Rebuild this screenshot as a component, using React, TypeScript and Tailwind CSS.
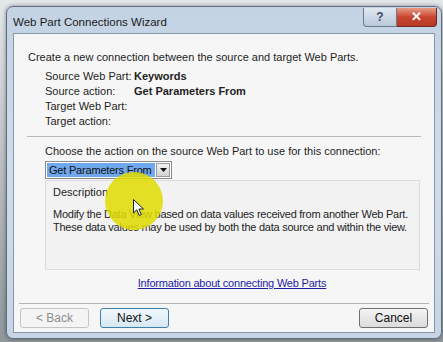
import React from 'react';

const font = { fontFamily: '"Liberation Sans", Arial, sans-serif' };

const InfoRow: React.FC<{ label: string; value?: string }> = ({ label, value }) => (
  <div className="flex h-[15px] items-center whitespace-nowrap">
    <span className="w-[89px]">{label}</span>
    {value && <span className="font-bold">{value}</span>}
  </div>
);

const Button: React.FC<{ label: string; disabled?: boolean; focused?: boolean }> = ({ label, disabled, focused }) => (
  <div
    className={`flex h-[20px] w-[69px] items-center justify-center rounded-[3px] border text-[12px] ${
      disabled
        ? 'border-[#c4c4c4] bg-[#f4f4f4] text-[#8d8d8d]'
        : focused
        ? 'border-[#3c7fb1] bg-gradient-to-b from-[#f2f8fc] to-[#d6e8f4] text-[#111]'
        : 'border-[#707070] bg-gradient-to-b from-[#f4f4f4] to-[#dcdcdc] text-[#111]'
    }`}
  >
    {label}
  </div>
);

export default function App() {
  return (
    <div className="relative h-[342px] w-[443px] overflow-hidden bg-gradient-to-b from-[#e4e7ea] to-[#8f969c] pt-[6px] pl-[6px] pr-[1px]" style={font}>
      {/* window frame */}
      <div className="h-[333px] rounded-[7px] border border-[#5f6d7c] bg-gradient-to-b from-[#c3d3e4] via-[#cfdceb] to-[#c6d5e5] px-[6px] shadow-[0_0_4px_rgba(0,0,0,0.4)]">
        {/* title bar */}
        <div className="flex h-[26px] items-start justify-between">
          <span className="pt-[7px] text-[11.5px] text-[#1b1b1b]">Web Part Connections Wizard</span>
          <div className="mr-[-2px] mt-[1px] flex">
            <div className="flex h-[19px] w-[34px] items-center justify-center rounded-bl-[4px] border border-t-0 border-[#6c7a8a] bg-gradient-to-b from-[#dfe8f2] to-[#b9c8d9] text-[12px] font-bold text-[#3b4b5e]">?</div>
            <div className="flex h-[19px] w-[40px] items-center justify-center rounded-br-[4px] border border-t-0 border-l-0 border-[#6a2a22] bg-gradient-to-b from-[#e59a86] via-[#c8452f] to-[#b73a24] text-[13px] font-bold text-white">✕</div>
          </div>
        </div>

        {/* client area */}
        <div className="h-[300px] whitespace-nowrap border border-[#8696a8] bg-[#f6f6f6] text-[11px] text-[#1e1e1e]">
          <div className="pl-[14px] pt-[16px] leading-[15px]">Create a new connection between the source and target Web Parts.</div>

          <div className="mt-[4px] pl-[31px]">
            <InfoRow label="Source Web Part:" value="Keywords" />
            <InfoRow label="Source action:" value="Get Parameters From" />
            <InfoRow label="Target Web Part:" />
            <InfoRow label="Target action:" />
          </div>

          <div className="mx-[13px] mt-[7px] h-px border-t border-[#b9b9b9]" />

          <div className="mt-[7px] pl-[31px]">
            <div className="h-[15px] leading-[15px]">Choose the action on the source Web Part to use for this connection:</div>
            <div className="mt-[2px] flex h-[18px] w-[127px] items-center border border-[#8a8a8a] bg-white p-[1px]">
              <div className="flex h-full flex-1 items-center bg-[#6fa8ec] pl-[2px] tracking-[-0.2px] text-[#111]">Get Parameters From</div>
              <div className="ml-[1px] flex h-full w-[14px] items-center justify-center border border-[#9a9a9a] bg-gradient-to-b from-[#f2f2f2] to-[#d2d2d2]">
                <svg width="7" height="4" viewBox="0 0 7 4"><path d="M0 0h7L3.5 4z" fill="#111" /></svg>
              </div>
            </div>

            <div className="mt-[1px] mr-[14px] h-[90px] border border-[#dcdcdc] bg-[#f2f2f2] pl-[7px]">
              <div className="pt-[3px]">Description</div>
              <div className="mt-[7px] leading-[13px] tracking-[-0.25px]">
                Modify the Data View based on data values received from another Web Part.
                <br />
                These data values may be used by both the data source and within the view.
              </div>
            </div>
          </div>

          <div className="mt-[5px] pl-[16px] text-center">
            <span className="tracking-[-0.2px] text-[#1c1ca6] underline">Information about connecting Web Parts</span>
          </div>

          <div className="mx-[5px] mt-[11px] h-px border-t border-[#b4b4b4]" />

          <div className="mt-[4px] flex items-center px-[6px]">
            <Button label="< Back" disabled />
            <div className="w-[11px]" />
            <Button label="Next >" focused />
            <div className="flex-1" />
            <Button label="Cancel" />
          </div>
        </div>
      </div>

      {/* cursor highlight */}
      <div className="absolute left-[105px] top-[172px] h-[58px] w-[58px] rounded-full bg-[#e0dc00] opacity-85" />
      <svg className="absolute left-[133px] top-[199px]" width="12" height="18" viewBox="0 0 12 18">
        <path d="M0.5 0.5 L0.5 14 L3.8 10.8 L6.2 16.5 L8.3 15.6 L5.9 10 L10.5 10 Z" fill="white" stroke="#222" strokeWidth="1" />
      </svg>
    </div>
  );
}
